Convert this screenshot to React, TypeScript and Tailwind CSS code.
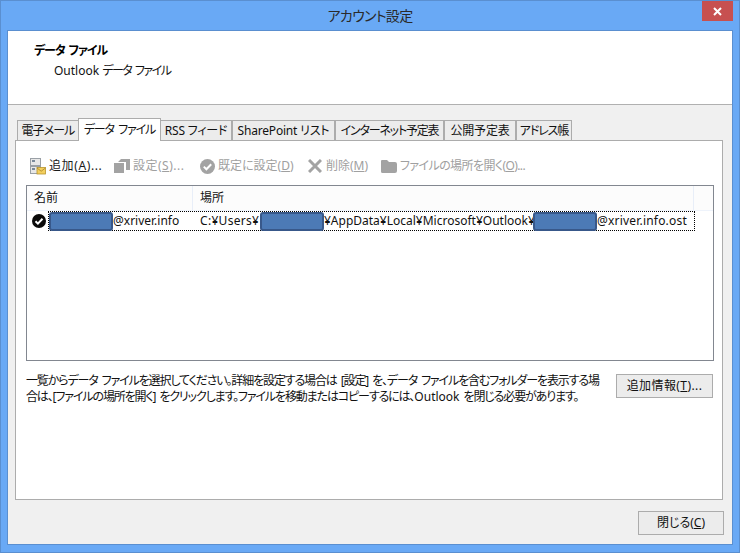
const font = "font-['Noto_Sans','Noto_Sans_CJK_JP',sans-serif] [font-feature-settings:'palt']";

const tabs = [
  { label: "電子メール", w: "w-[62px]", t: "tracking-[-0.9px]" },
  { label: "データ ファイル", w: "w-[83px]", t: "tracking-[-1.1px] [word-spacing:2px]", active: true },
  { label: "RSS フィード", w: "w-[72px]", t: "tracking-[-0.2px]" },
  { label: "SharePoint リスト", w: "w-[103px]", t: "tracking-[-0.2px]" },
  { label: "インターネット予定表", w: "w-[109px]", t: "tracking-[-1.2px]" },
  { label: "公開予定表", w: "w-[72px]", t: "tracking-[-0.2px]" },
  { label: "アドレス帳", w: "w-[56px]", t: "tracking-[-1.1px]" },
];

function Redact({ w }: { w: string }) {
  return <span className={`inline-block h-[19px] rounded-[3px] border-[2px] border-[#38588a] bg-[#4c7ab6] align-top ${w}`} />;
}

function AddIcon() {
  return (
    <svg width="16" height="17" viewBox="0 0 16 17">
      <rect x="0.5" y="0.5" width="10" height="7" fill="#e8e8e8" stroke="#9aa0a6" />
      <rect x="0.5" y="8.5" width="10" height="7" fill="#e8e8e8" stroke="#9aa0a6" />
      <rect x="2" y="2" width="3" height="2" fill="#7a8a9a" />
      <rect x="2" y="10" width="3" height="2" fill="#7a8a9a" />
      <rect x="7" y="9.5" width="8.5" height="6.5" fill="#f3cf5e" stroke="#b8952c" strokeWidth="0.8" />
      <path d="M7 10l4.2 3.2L15.5 10" fill="none" stroke="#a8842a" strokeWidth="0.8" />
    </svg>
  );
}

function SettingsIcon() {
  return (
    <svg width="16" height="14" viewBox="0 0 16 14">
      <path d="M0 4h10v10H0zM4 3l3-3h9v11h-4V3z" fill="#a3a3a3" />
    </svg>
  );
}

function DefaultIcon() {
  return (
    <svg width="15" height="15" viewBox="0 0 15 15">
      <circle cx="7.5" cy="7.5" r="7.5" fill="#a3a3a3" />
      <path d="M3.8 7.6l2.6 2.6 4.8-5" fill="none" stroke="#fff" strokeWidth="2" />
    </svg>
  );
}

function DeleteIcon() {
  return (
    <svg width="14" height="14" viewBox="0 0 14 14">
      <path d="M1 1l12 12M13 1L1 13" stroke="#a3a3a3" strokeWidth="3" />
    </svg>
  );
}

function FolderIcon() {
  return (
    <svg width="16" height="13" viewBox="0 0 16 13">
      <path d="M1 0h5l2 2h6a2 2 0 0 1 2 2v7a2 2 0 0 1-2 2H1.5A1.5 1.5 0 0 1 0 11.5V1a1 1 0 0 1 1-1z" fill="#a3a3a3" />
    </svg>
  );
}

function CheckBadge() {
  return (
    <svg width="14" height="14" viewBox="0 0 14 14">
      <circle cx="7" cy="7" r="7" fill="#0a0a0a" />
      <path d="M3.5 7.2l2.4 2.4 4.6-4.8" fill="none" stroke="#fff" strokeWidth="2" />
    </svg>
  );
}

function ToolButton({ icon, label, hot, rest, disabled, w, t }: { icon: React.ReactNode; label: string; hot: string; rest: string; disabled?: boolean; w: string; t?: string }) {
  return (
    <div className={`flex shrink-0 items-center gap-[3px] ${w} ${disabled ? "text-[#a0a0a0]" : "text-[#1a1a1a]"}`}>
      <span className="flex w-[16px] justify-center">{icon}</span>
      <span className={`whitespace-nowrap ${t ?? ""}`}>
        {label}
        <span className="underline">{hot}</span>
        {rest}
      </span>
    </div>
  );
}

export default function App() {
  return (
    <div className={`${font} flex h-[553px] w-[740px] flex-col overflow-hidden border border-[#5a8fd0] bg-[#69a9f5] text-[12px] leading-[16px] text-[#111]`}>
      {/* Title bar */}
      <div className="relative flex h-[29px] shrink-0 items-center justify-center">
        <span className="text-[14px] tracking-[-0.7px] text-[#2a2a2a]">アカウント設定</span>
        <div className="absolute right-[6px] top-0 flex h-[20px] w-[31px] items-center justify-center bg-[#c75050]">
          <svg width="9" height="9" viewBox="0 0 9 9">
            <path d="M1 1l7 7M8 1L1 8" stroke="#fff" strokeWidth="2" />
          </svg>
        </div>
      </div>

      {/* Client area */}
      <div className="mx-[6px] flex flex-1 flex-col border border-[#5a8fd0] bg-[#f0f0f0]">
        <div className="h-[74px] shrink-0 border-b border-[#b0b0b0] bg-white pl-[26px] pt-[12px]">
          <div className="font-bold tracking-[-1.1px] text-black [word-spacing:2px]">データ ファイル</div>
          <div className="ml-[20px] mt-[4px]">
            Outlook <span className="tracking-[-1.5px] [word-spacing:2px]">データ ファイル</span>
          </div>
        </div>

        <div className="flex-1 px-[7px] pt-[13px]">
          {/* Tabs */}
          <div className="relative z-10 ml-[2px] flex h-[22px] items-end">
            {tabs.map((tab) => (
              <div
                key={tab.label}
                className={`${tab.w} ${tab.t} flex shrink-0 items-center justify-center whitespace-nowrap border border-[#acacac] ${
                  tab.active ? "-mx-[1px] mb-[-1px] h-[23px] border-b-0 bg-white" : "h-[20px] border-b-0 bg-[#ececec]"
                }`}
              >
                {tab.label}
              </div>
            ))}
          </div>

          {/* Panel */}
          <div className="flex h-[360px] w-[708px] flex-col border border-[#acacac] bg-white pl-[10px] pr-[8px]">
            <div className="flex h-[44px] shrink-0 items-center pl-[4px] pt-[6px]">
              <ToolButton icon={<AddIcon />} label="追加(" hot="A" rest=")..." w="w-[84px]" t="tracking-[0.6px]" />
              <ToolButton disabled icon={<SettingsIcon />} label="設定(" hot="S" rest=")..." w="w-[85px]" t="tracking-[0.5px]" />
              <ToolButton disabled icon={<DefaultIcon />} label="既定に設定(" hot="D" rest=")" w="w-[108px]" />
              <ToolButton disabled icon={<DeleteIcon />} label="削除(" hot="M" rest=")" w="w-[74px]" />
              <ToolButton disabled icon={<FolderIcon />} label="ファイルの場所を開く(" hot="O" rest=")..." w="w-[150px]" t="tracking-[-0.6px]" />
            </div>

            {/* List */}
            <div className="h-[176px] w-[688px] shrink-0 border border-[#828790] bg-white">
              <div className="flex h-[25px] border-b border-[#eef3fb] bg-[#fcfcfc]">
                <div className="w-[166px] border-r border-[#e8eef8] pl-[7px] pt-[4px]">名前</div>
                <div className="w-[501px] border-r border-[#e8eef8] pl-[7px] pt-[4px]">場所</div>
              </div>
              <div className="flex h-[20px] items-center pl-[5px]">
                <CheckBadge />
                <div className="ml-[2px] flex h-[20px] w-[647px] items-center whitespace-nowrap border border-dotted border-black">
                  <Redact w="w-[64px]" />
                  <span className="w-[87px]">@xriver.info</span>
                  <span className="w-[60px] tracking-[0.3px]">C:¥Users¥</span>
                  <Redact w="w-[64px]" />
                  <span className="w-[209px]">¥AppData¥Local¥Microsoft¥Outlook¥</span>
                  <Redact w="w-[64px]" />
                  <span className="tracking-[0.2px]">@xriver.info.ost</span>
                </div>
              </div>
            </div>

            <div className="mt-[11px] flex justify-between pr-[1px]">
              <p className="w-[580px] whitespace-nowrap pt-[1px] tracking-[-1.13px] [word-spacing:2px]">
                一覧からデータ ファイルを選択してください。詳細を設定する場合は [設定] を、データ ファイルを含むフォルダーを表示する場
                <br />
                <span className="tracking-[-1.13px]">合は、[ファイルの場所を開く] をクリックします。ファイルを移動またはコピーするには、</span>
                <span className="tracking-normal">Outlook</span> を閉じる必要があります。
              </p>
              <button className="mt-[2px] h-[24px] w-[97px] border border-[#acacac] bg-[#ececec] tracking-[0.4px]">
                追加情報(<span className="underline">T</span>)...
              </button>
            </div>
          </div>

          {/* Footer */}
          <div className="mt-[11px] flex w-[709px] justify-end">
            <button className="h-[24px] w-[86px] border border-[#acacac] bg-[#ececec]">
              閉じる(<span className="underline">C</span>)
            </button>
          </div>
        </div>
      </div>
      <div className="h-[7px] shrink-0" />
    </div>
  );
}
